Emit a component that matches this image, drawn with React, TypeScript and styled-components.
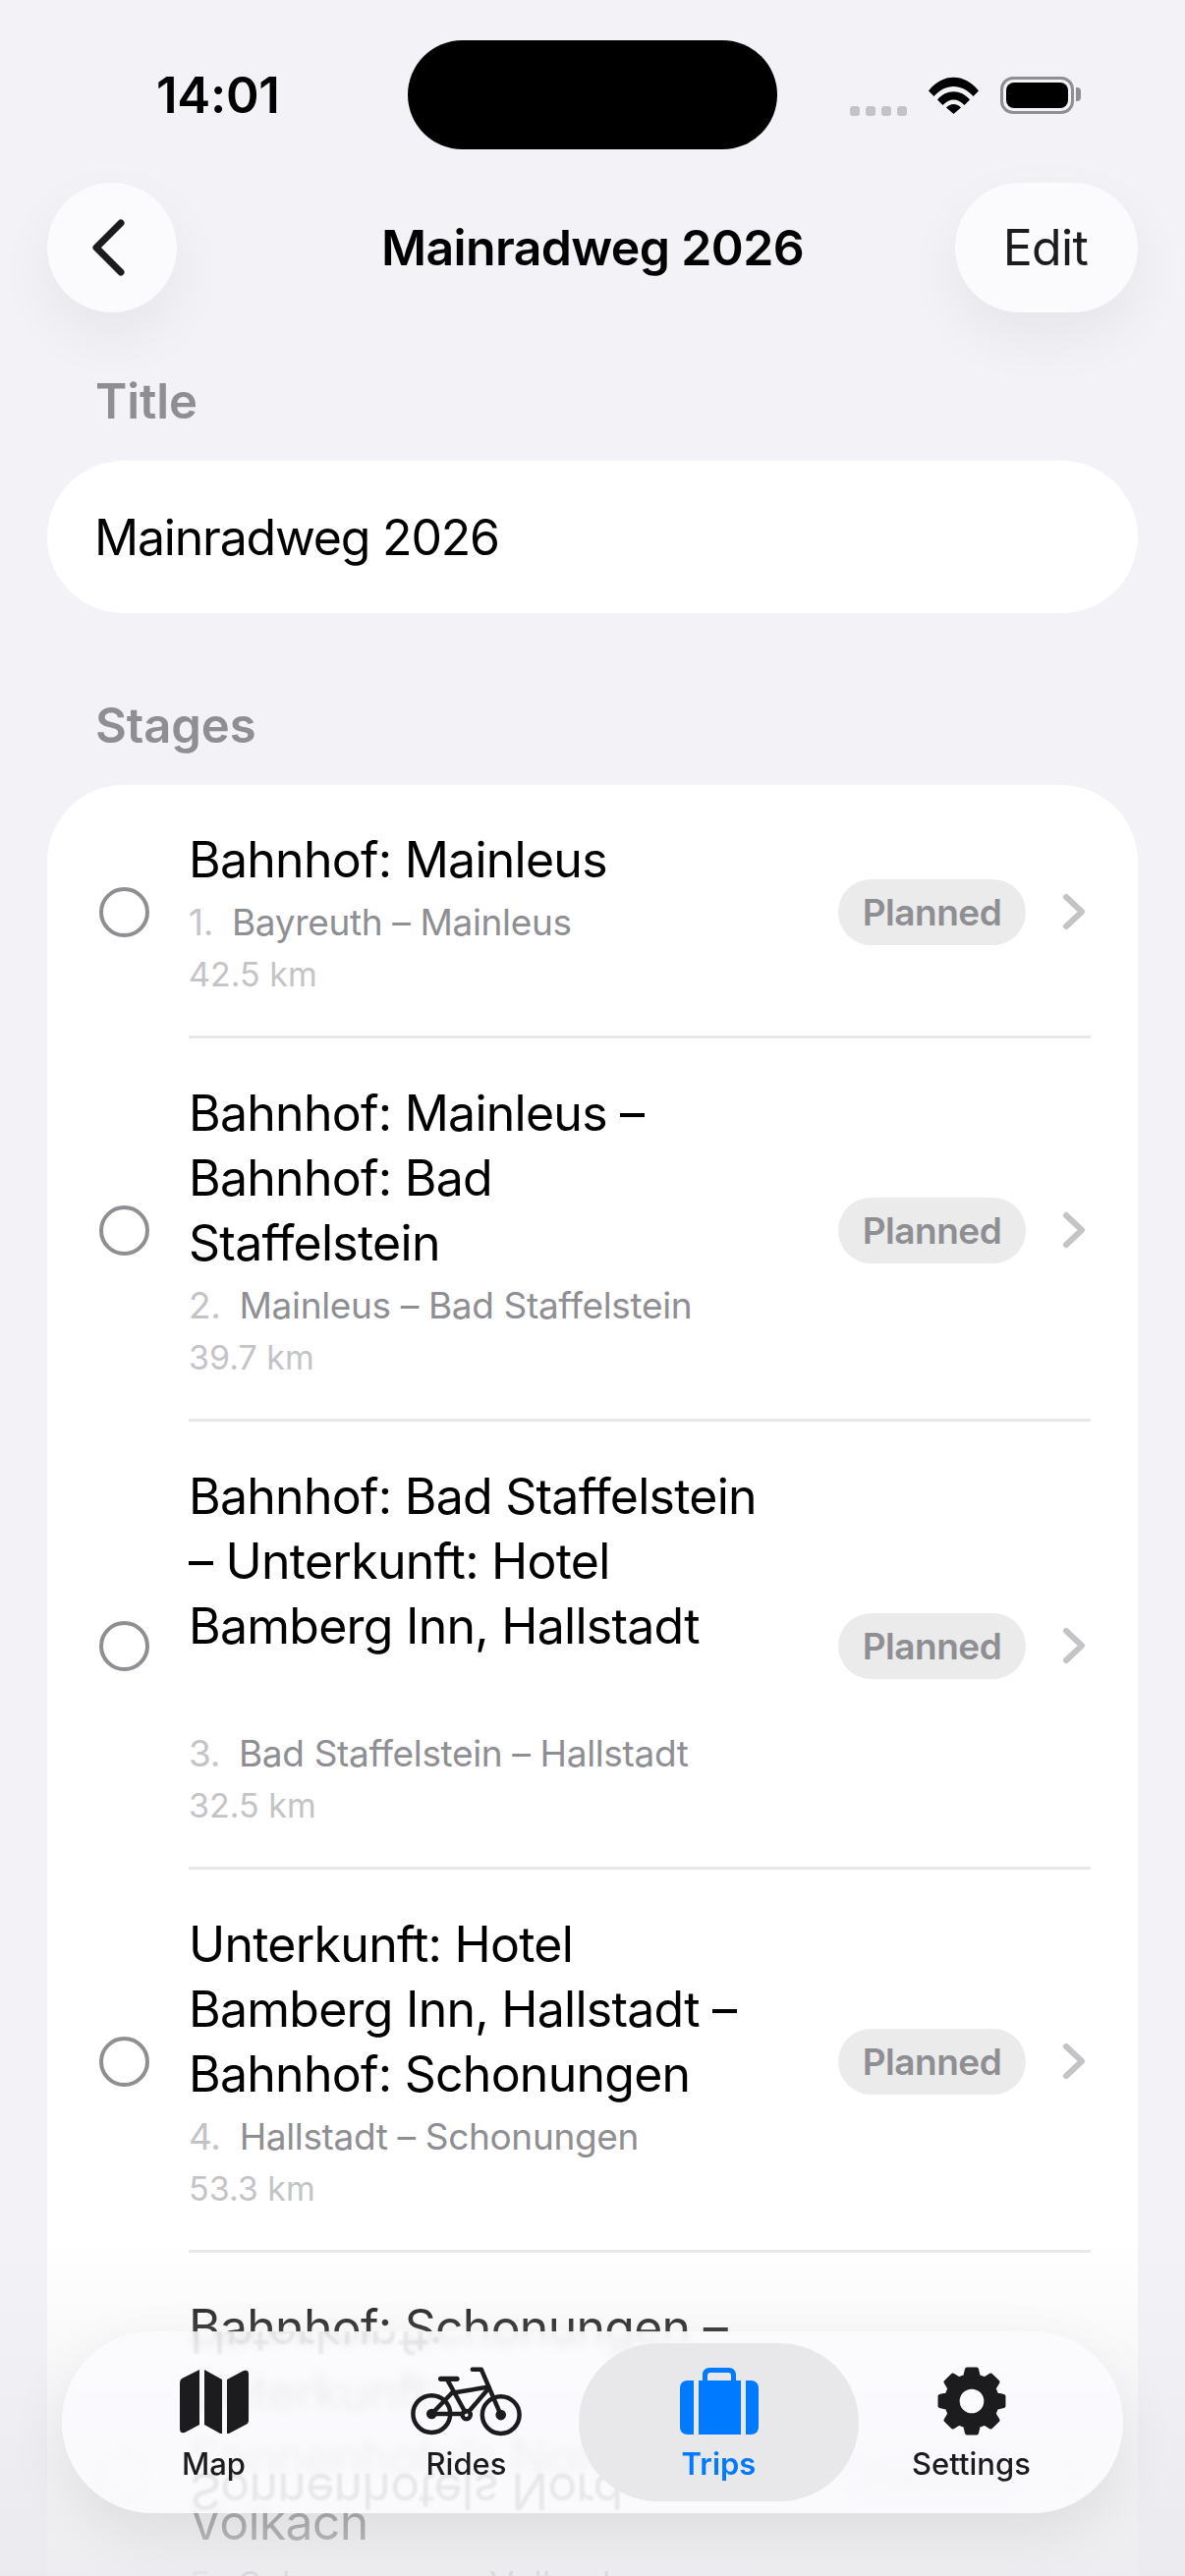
import React from 'react';
import styled, { createGlobalStyle } from 'styled-components';

const GlobalStyle = createGlobalStyle`
  html, body {
    margin: 0;
    padding: 0;
    background: #f2f2f7;
  }
  * {
    box-sizing: border-box;
  }
`;

const Screen = styled.div`
  position: relative;
  width: 1206px;
  height: 2622px;
  overflow: hidden;
  background: #f2f2f7;
  font-family: Inter, "Liberation Sans", sans-serif;
  color: #000;
`;

const StatusBar = styled.div`
  display: grid;
  grid-template-columns: 415px 376px 1fr;
  align-items: center;
  height: 111px;
  margin-top: 41px;
`;

const Clock = styled.div`
  padding-left: 159px;
  font-size: 51px;
  font-weight: 600;
  letter-spacing: -0.3px;
`;

const Island = styled.div`
  height: 111px;
  border-radius: 56px;
  background: #000;
`;

const StatusIcons = styled.div`
  display: flex;
  align-items: center;
  padding-left: 74px;
`;

const SignalDots = styled.div`
  display: flex;
  gap: 6px;
  margin-top: 33px;
  margin-right: 22px;
`;

const SignalDot = styled.span`
  width: 10px;
  height: 10px;
  border-radius: 3px;
  background: #c4c4c8;
`;

const Battery = styled.div`
  position: relative;
  width: 75px;
  height: 38px;
  margin-left: 22px;
  padding: 3px;
  border: 3px solid #8e8e93;
  border-radius: 13px;

  &::before {
    content: '';
    display: block;
    height: 100%;
    border-radius: 8px;
    background: #000;
  }

  &::after {
    content: '';
    position: absolute;
    top: 8px;
    right: -10px;
    width: 5px;
    height: 14px;
    border-radius: 0 4px 4px 0;
    background: #8e8e93;
  }
`;

const NavBar = styled.div`
  display: grid;
  grid-template-columns: 1fr auto 1fr;
  align-items: center;
  height: 132px;
  margin-top: 34px;
  padding: 0 48px;
`;

const GlassButton = styled.button`
  display: flex;
  align-items: center;
  justify-content: center;
  height: 132px;
  border: 0;
  border-radius: 66px;
  background: #fbfbfe;
  box-shadow: 0 24px 60px rgba(0, 0, 0, 0.055);
  color: #1c1c1e;
  font: inherit;
  font-size: 50px;
`;

const BackButton = styled(GlassButton)`
  justify-self: start;
  width: 132px;
  padding: 0 8px 0 0;
`;

const EditButton = styled(GlassButton)`
  justify-self: end;
  width: 186px;
  padding: 0 2px 0 0;
  letter-spacing: -0.6px;
`;

const NavTitle = styled.h1`
  margin: 0;
  font-size: 50px;
  font-weight: 600;
  letter-spacing: -0.65px;
`;

const Content = styled.div`
  padding: 0 48px;
`;

const SectionLabel = styled.div`
  padding-left: 49px;
  font-size: 49px;
  line-height: 60px;
  font-weight: 600;
  letter-spacing: -0.1px;
  color: #8e8e93;
`;

const TitleLabel = styled(SectionLabel)`
  margin-top: 61px;
`;

const StagesLabel = styled(SectionLabel)`
  margin-top: 85px;
`;

const TitleField = styled.div`
  display: flex;
  align-items: center;
  height: 155px;
  margin-top: 30px;
  padding-left: 48px;
  border-radius: 78px;
  background: #fff;
  font-size: 50px;
  letter-spacing: -1.2px;
`;

const StageCard = styled.div`
  margin-top: 30px;
  border-radius: 78px;
  background: #fff;
`;

const StageRow = styled.div`
  display: flex;
  align-items: center;
  padding-left: 53px;
  padding-right: 48px;
`;

const Radio = styled.span`
  flex: none;
  width: 51px;
  height: 51px;
  margin-right: 40px;
  border: 4px solid #8e8e93;
  border-radius: 50%;
`;

const StageBody = styled.div<{ $last?: boolean }>`
  flex: 1;
  display: flex;
  align-items: center;
  padding: 43px 0 36px;
  border-bottom: ${props => (props.$last ? '0' : '3px solid #e8e8ea')};
`;

const StageText = styled.div`
  flex: 1;
  min-width: 0;
`;

const StageTitle = styled.div<{ $lines?: number }>`
  min-height: ${props => (props.$lines || 1) * 66}px;
  margin-bottom: 4px;
  font-size: 50px;
  line-height: 66px;
  letter-spacing: -0.75px;
  white-space: pre-line;
`;

const StageRoute = styled.div`
  font-size: 37px;
  line-height: 53px;
  letter-spacing: -0.35px;
  color: #8e8e93;
`;

const StageNumber = styled.span`
  margin-right: 19px;
  color: #c4c4c7;
`;

const StageDistance = styled.div`
  min-height: 53px;
  font-size: 34px;
  line-height: 53px;
  color: #c4c4c7;
`;

const StatusPill = styled.span`
  display: flex;
  align-items: center;
  justify-content: center;
  flex: none;
  width: 191px;
  height: 67px;
  margin-top: -4px;
  border-radius: 34px;
  background: #ebebeb;
  color: #8e8e93;
  font-size: 37px;
  font-weight: 600;
  letter-spacing: -0.5px;
`;

const RowChevron = styled.svg`
  flex: none;
  width: 24px;
  height: 38px;
  margin-top: -4px;
  margin-left: 37px;
  margin-right: 5px;
`;

const BottomFade = styled.div`
  position: absolute;
  left: 0;
  right: 0;
  bottom: 0;
  height: 345px;
  background: linear-gradient(
    to bottom,
    rgba(236, 236, 240, 0) 0%,
    rgba(236, 236, 240, 0.35) 35%,
    rgba(234, 234, 238, 0.72) 80%,
    rgba(234, 234, 238, 0.84) 100%
  );
`;

const TabBar = styled.nav`
  position: absolute;
  left: 63px;
  top: 2373px;
  display: grid;
  grid-template-columns: repeat(4, 257px);
  width: 1080px;
  height: 185px;
  padding: 12px 24px 12px 26px;
  border-radius: 93px;
  background: rgba(251, 251, 254, 0.9);
  backdrop-filter: blur(5px);
  box-shadow: 0 20px 60px rgba(0, 0, 0, 0.08);
`;

const Reflections = styled.div`
  position: absolute;
  inset: 0;
  overflow: hidden;
  border-radius: 93px;
`;

const MirrorText = styled.span<{ $top: number }>`
  position: absolute;
  left: 130px;
  top: ${props => props.$top}px;
  font-size: 50px;
  line-height: 66px;
  letter-spacing: -0.75px;
  white-space: nowrap;
  color: rgba(0, 0, 0, 0.08);
  transform: scaleY(-1);
  filter: blur(1px);
`;

const Tab = styled.div<{ $active?: boolean }>`
  position: relative;
  display: flex;
  flex-direction: column;
  align-items: center;
  color: ${props => (props.$active ? '#007aff' : '#1c1c1e')};

  &::before {
    content: '';
    display: ${props => (props.$active ? 'block' : 'none')};
    position: absolute;
    top: 0;
    bottom: 0;
    left: -14px;
    right: -14px;
    border-radius: 81px;
    background: #e8e8ea;
  }
`;

const TabIcon = styled.div`
  position: relative;
  display: flex;
  align-items: center;
  justify-content: center;
  height: 74px;
  margin-top: 22px;
`;

const TabLabel = styled.span<{ $active?: boolean }>`
  position: relative;
  margin-top: 8px;
  font-size: 31px;
  line-height: 38px;
  font-weight: ${props => (props.$active ? 600 : 500)};
`;

const gearPath = (() => {
  const cx = 60;
  const cy = 60;
  const points: string[] = [];
  for (let i = 0; i < 8; i++) {
    const a = (i * Math.PI) / 4 - Math.PI / 2;
    const spots: [number, number][] = [
      [42, -0.26],
      [53, -0.15],
      [53, 0.15],
      [42, 0.26],
    ];
    spots.forEach(([r, d]) => {
      points.push(`${(cx + r * Math.cos(a + d)).toFixed(2)} ${(cy + r * Math.sin(a + d)).toFixed(2)}`);
    });
  }
  return `M${points.join('L')}Z`;
})();

const WifiIcon = () => (
  <svg width="51" height="38" viewBox="0 0 51 38">
    <path d="M0 14.5C14-4 37-4 51 14.5L45.5 20C34 6.5 17 6.5 5.500 20Z" fill="#000" />
    <path d="M9 23.500C18 12.500 33 12.500 42 23.500L36.500 29C30 21.500 21 21.500 14.500 29Z" fill="#000" />
    <path d="M18 31.500C22 26.800 29 26.800 33 31.500L25.500 38Z" fill="#000" />
  </svg>
);

const MapIcon = () => (
  <svg width="71" height="66" viewBox="0 0 71 66" fill="#1c1c1e">
    <path d="M21 1V57L6 65C3 66 1 65 1 61V15C1 12 2 10 5 9Z" />
    <path d="M26 1L44 11V67L26 57Z" />
    <path d="M49 11L66 2C69 1 71 2 71 5V52C71 55 70 56 68 57L49 67Z" />
  </svg>
);

const BikeIcon = () => (
  <svg width="113" height="71" viewBox="3 3 329 205" fill="none" stroke="#1c1c1e" strokeWidth="13" strokeLinecap="round" strokeLinejoin="round">
    <circle cx="65" cy="142" r="55" />
    <circle cx="270" cy="145" r="55" />
    <circle cx="168" cy="145" r="12" />
    <path d="M92 38H140" strokeWidth="15" />
    <path d="M110 38L164 136" />
    <path d="M186 10H212L270 145" />
    <path d="M125 80L234 62" />
    <path d="M234 66L176 134" />
    <path d="M125 80L65 142H156" />
    <circle cx="65" cy="142" r="9" fill="#1c1c1e" />
    <circle cx="270" cy="145" r="9" fill="#1c1c1e" />
  </svg>
);

const BriefcaseIcon = () => (
  <svg width="80" height="68" viewBox="0 0 80 68" fill="#007aff">
    <path d="M14 13V68H8C3 68 0 65 0 60V21C0 16 3 13 8 13Z" />
    <path d="M19 13H23V7C23 3 26 0 30 0H50C54 0 57 3 57 7V13H62V68H19ZM28 13H52V8C52 6 51 5 49 5H31C29 5 28 6 28 8Z" fillRule="evenodd" />
    <path d="M67 13H72C77 13 80 16 80 21V60C80 65 77 68 72 68H67Z" />
  </svg>
);

const GearIcon = () => (
  <svg width="74" height="74" viewBox="0 0 120 120">
    <path d={gearPath} fill="#1c1c1e" stroke="#1c1c1e" strokeWidth="7" strokeLinejoin="round" />
    <circle cx="60" cy="60" r="20" fill="#fbfbfe" />
  </svg>
);

const stages = [
  { title: 'Bahnhof: Mainleus', route: 'Bayreuth – Mainleus', km: '42.5 km' },
  { title: 'Bahnhof: Mainleus –\nBahnhof: Bad\nStaffelstein', route: 'Mainleus – Bad Staffelstein', km: '39.7 km' },
  {
    title: 'Bahnhof: Bad Staffelstein\n– Unterkunft: Hotel\nBamberg Inn, Hallstadt',
    route: 'Bad Staffelstein – Hallstadt',
    km: '32.5 km',
    lines: 4,
  },
  {
    title: 'Unterkunft: Hotel\nBamberg Inn, Hallstadt –\nBahnhof: Schonungen',
    route: 'Hallstadt – Schonungen',
    km: '53.3 km',
  },
  {
    title: 'Bahnhof: Schonungen –\nUnterkunft:\nSonnenhotels Nord\nVolkach',
    route: 'Schonungen – Volkach',
    km: '',
  },
];

const tabs = [
  { label: 'Map', icon: <MapIcon /> },
  { label: 'Rides', icon: <BikeIcon /> },
  { label: 'Trips', icon: <BriefcaseIcon />, active: true },
  { label: 'Settings', icon: <GearIcon /> },
];

const App: React.FC = () => {
  return (
    <Screen>
      <GlobalStyle />
      <StatusBar>
        <Clock>14:01</Clock>
        <Island />
        <StatusIcons>
          <SignalDots>
            <SignalDot />
            <SignalDot />
            <SignalDot />
            <SignalDot />
          </SignalDots>
          <WifiIcon />
          <Battery />
        </StatusIcons>
      </StatusBar>

      <NavBar>
        <BackButton aria-label="Back">
          <svg width="36" height="58" viewBox="0 0 36 58" fill="none">
            <path d="M31 4L6 29L31 54" stroke="#1c1c1e" strokeWidth="7" strokeLinecap="round" strokeLinejoin="round" />
          </svg>
        </BackButton>
        <NavTitle>Mainradweg 2026</NavTitle>
        <EditButton>Edit</EditButton>
      </NavBar>

      <Content>
        <TitleLabel>Title</TitleLabel>
        <TitleField>Mainradweg 2026</TitleField>
        <StagesLabel>Stages</StagesLabel>
        <StageCard>
          {stages.map((stage, idx) => (
            <StageRow key={idx}>
              <Radio />
              <StageBody $last={idx === stages.length - 1}>
                <StageText>
                  <StageTitle $lines={stage.lines}>{stage.title}</StageTitle>
                  <StageRoute>
                    <StageNumber>{idx + 1}.</StageNumber>
                    {stage.route}
                  </StageRoute>
                  <StageDistance>{stage.km}</StageDistance>
                </StageText>
                <StatusPill>Planned</StatusPill>
                <RowChevron viewBox="0 0 24 38" fill="none">
                  <path d="M4 4L20 19L4 34" stroke="#c4c4c7" strokeWidth="6" strokeLinecap="round" strokeLinejoin="round" />
                </RowChevron>
              </StageBody>
            </StageRow>
          ))}
        </StageCard>
      </Content>

      <BottomFade />

      <TabBar>
        <Reflections>
          <MirrorText $top={-29}>Unterkunft:</MirrorText>
          <MirrorText $top={130}>Sonnenhotels Nord</MirrorText>
        </Reflections>
        {tabs.map(tab => (
          <Tab key={tab.label} $active={tab.active}>
            <TabIcon>{tab.icon}</TabIcon>
            <TabLabel $active={tab.active}>{tab.label}</TabLabel>
          </Tab>
        ))}
      </TabBar>
    </Screen>
  );
};

export default App;
